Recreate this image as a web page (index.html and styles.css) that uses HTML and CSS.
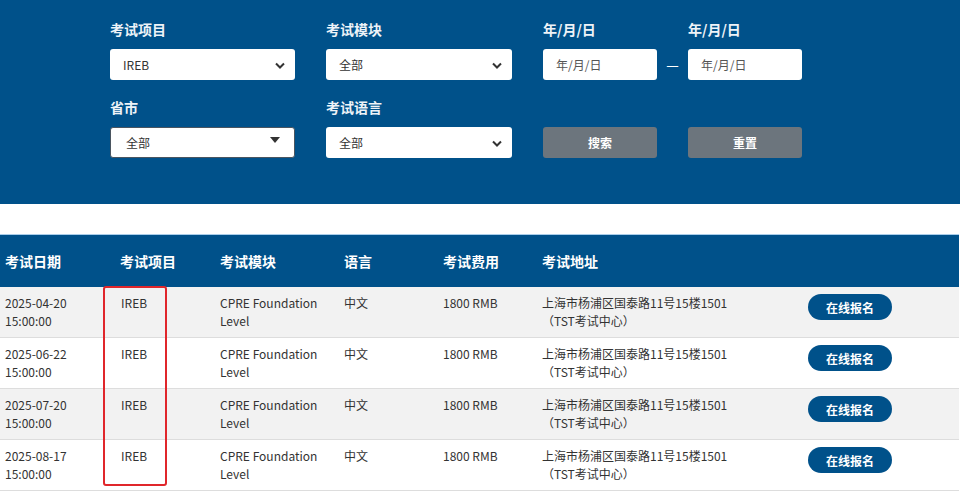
FILE: index.html
```html
<!DOCTYPE html>
<html lang="zh-CN">
<head>
    <meta charset="UTF-8">
    <title>考试安排</title>
    <link rel="stylesheet" href="styles.css">
</head>
<body>
    <div class="filter">
        <div class="filter-row">
            <div class="field wide">
                <label>考试项目</label>
                <div class="select"><span>IREB</span><svg class="chev" width="10" height="7" viewBox="0 0 10 7"><path d="M1 1.5l4 4 4-4" fill="none" stroke="#333" stroke-width="2"/></svg></div>
            </div>
            <div class="field wide">
                <label>考试模块</label>
                <div class="select"><span>全部</span><svg class="chev" width="10" height="7" viewBox="0 0 10 7"><path d="M1 1.5l4 4 4-4" fill="none" stroke="#333" stroke-width="2"/></svg></div>
            </div>
            <div class="field date">
                <label>年/月/日</label>
                <div class="date-input">年/月/日</div>
            </div>
            <div class="range-sep">—</div>
            <div class="field date">
                <label>年/月/日</label>
                <div class="date-input">年/月/日</div>
            </div>
        </div>
        <div class="filter-row">
            <div class="field wide">
                <label>省市</label>
                <div class="select province"><span>全部</span><svg class="caret" width="10" height="6" viewBox="0 0 10 6"><path d="M0 0h10L5 6z" fill="#333"/></svg></div>
            </div>
            <div class="field wide">
                <label>考试语言</label>
                <div class="select"><span>全部</span><svg class="chev" width="10" height="7" viewBox="0 0 10 7"><path d="M1 1.5l4 4 4-4" fill="none" stroke="#333" stroke-width="2"/></svg></div>
            </div>
            <div class="field date">
                <button class="btn-gray">搜索</button>
            </div>
            <div class="range-sep"></div>
            <div class="field date">
                <button class="btn-gray">重置</button>
            </div>
        </div>
    </div>

    <div class="table-wrap">
        <table class="exam-table">
            <colgroup>
                <col style="width:115px"><col style="width:100px"><col style="width:124px"><col style="width:99px">
                <col style="width:99px"><col style="width:266px"><col>
            </colgroup>
            <thead>
                <tr><th>考试日期</th><th>考试项目</th><th>考试模块</th><th>语言</th><th>考试费用</th><th>考试地址</th><th></th></tr>
            </thead>
            <tbody>
                <tr><td>2025-04-20<br>15:00:00</td><td>IREB</td><td>CPRE Foundation<br>Level</td><td>中文</td><td>1800 RMB</td><td>上海市杨浦区国泰路11号15楼1501<br>（TST考试中心）</td><td><button class="btn-apply">在线报名</button></td></tr>
                <tr><td>2025-06-22<br>15:00:00</td><td>IREB</td><td>CPRE Foundation<br>Level</td><td>中文</td><td>1800 RMB</td><td>上海市杨浦区国泰路11号15楼1501<br>（TST考试中心）</td><td><button class="btn-apply">在线报名</button></td></tr>
                <tr><td>2025-07-20<br>15:00:00</td><td>IREB</td><td>CPRE Foundation<br>Level</td><td>中文</td><td>1800 RMB</td><td>上海市杨浦区国泰路11号15楼1501<br>（TST考试中心）</td><td><button class="btn-apply">在线报名</button></td></tr>
                <tr><td>2025-08-17<br>15:00:00</td><td>IREB</td><td>CPRE Foundation<br>Level</td><td>中文</td><td>1800 RMB</td><td>上海市杨浦区国泰路11号15楼1501<br>（TST考试中心）</td><td><button class="btn-apply">在线报名</button></td></tr>
            </tbody>
        </table>
        <div class="highlight"></div>
    </div>
</body>
</html>
```

FILE: styles.css
```css
body { margin: 0; font-family: "Noto Sans CJK SC", "Noto Sans", sans-serif; color: #333; background: #fff; width: 960px; }

.filter { background: #00518a; height: 204px; box-sizing: border-box; padding: 19px 0 0 110px; }
.filter-row { display: flex; align-items: flex-end; margin-bottom: 17px; }
.field label { display: block; color: #eef3f8; font-size: 14px; font-weight: bold; line-height: 20px; margin-bottom: 10px; }
.field.wide { width: 185px; margin-right: 31px; }
.field.wide + .field.wide { width: 186px; }
.field.date { width: 114px; }
.range-sep { width: 31px; height: 31px; line-height: 31px; text-align: center; color: #fff; font-size: 14px; }

.select { height: 31px; background: #fff; border-radius: 3px; box-sizing: border-box; padding: 0 10px 0 13px; display: flex; align-items: center; justify-content: space-between; font-size: 12px; color: #333; }
.select.province { border: 1px solid #4a5560; padding: 0 14px 0 15px; }
.select .chev { margin-top: 1px; }
.select .caret { margin-top: -6px; }
.date-input { height: 31px; line-height: 31px; background: #fff; border-radius: 3px; padding-left: 13px; font-size: 12px; color: #555; }
.btn-gray { width: 114px; height: 31px; border: none; border-radius: 3px; background: #6c757d; color: #fff; font-family: inherit; font-size: 12px; font-weight: bold; }

.table-wrap { position: relative; margin-top: 30px; width: 959px; }
.exam-table { width: 959px; border-collapse: collapse; table-layout: fixed; font-size: 12px; }
.exam-table th { background: #00518a; color: #fff; font-size: 14px; font-weight: bold; text-align: left; height: 52px; padding: 0 5px; border-top: 1px solid #a9cdea; }
.exam-table td { padding: 7px 5px 7px 5px; height: 36px; line-height: 18px; vertical-align: top; border-bottom: 1px solid #ddd; }
.exam-table td:nth-child(2) { padding-left: 6px; }
.exam-table tbody tr:nth-child(odd) { background: #f2f2f2; }
.btn-apply { width: 84px; height: 26px; border: none; border-radius: 13px; background: #00518a; color: #fff; font-family: inherit; font-size: 12px; font-weight: bold; margin-left: 0; }

.highlight { position: absolute; left: 103px; top: 52px; width: 60px; height: 196px; border: 2px solid #e0262b; border-radius: 3px; }
```
